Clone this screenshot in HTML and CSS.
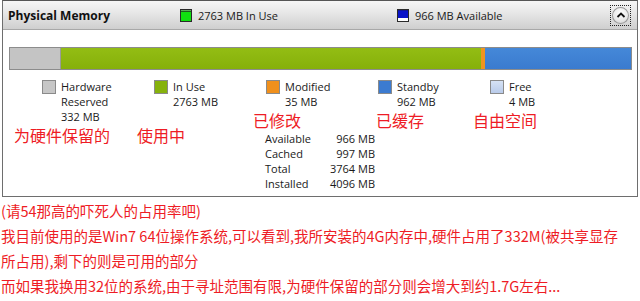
FILE: index.html
```html
<!DOCTYPE html>
<html lang="zh-CN">
<head>
    <meta charset="UTF-8">
    <title>Physical Memory</title>
    <link rel="stylesheet" href="styles.css">
</head>
<body>
    <div class="panel">
        <div class="header">
            <div class="title">Physical Memory</div>
            <div class="summary summary-use">
                <svg class="chip" width="12" height="13" viewBox="0 0 12 13">
                    <rect x="0.5" y="0.5" width="11" height="12" fill="#10e010" stroke="#2a2a2a"/>
                    <rect x="1" y="1" width="10" height="2" fill="#1d5a1d"/>
                    <path d="M2 1v1M4 1v1M6 1v1M8 1v1M10 1v1" stroke="#9f9" stroke-width="1"/>
                </svg>
                <span>2763 MB In Use</span>
            </div>
            <div class="summary summary-free">
                <svg class="chip" width="12" height="13" viewBox="0 0 12 13">
                    <rect x="0.5" y="0.5" width="11" height="12" fill="#ffffff" stroke="#2a2a2a"/>
                    <rect x="1" y="1" width="10" height="8" fill="#0a14c8"/>
                    <path d="M2 1v1M4 1v1M6 1v1M8 1v1M10 1v1" stroke="#1a1a66" stroke-width="1"/>
                </svg>
                <span>966 MB Available</span>
            </div>
            <div class="collapse">
                <span class="collapse-btn">
                    <svg width="10" height="8" viewBox="0 0 10 8">
                        <path d="M1.5 6 L5 2.5 L8.5 6" fill="none" stroke="#111" stroke-width="1.8"/>
                    </svg>
                </span>
            </div>
        </div>

        <div class="content">
            <div class="bar">
                <div class="seg seg-hw" style="width: 50px"></div>
                <div class="seg seg-use" style="width: 420px"></div>
                <div class="seg seg-mod" style="width: 4px"></div>
                <div class="seg seg-standby" style="flex: 1"></div>
            </div>

            <div class="legend">
                <div class="item">
                    <span class="swatch sw-hw"></span>
                    <div class="lines">Hardware<br>Reserved<br>332 MB</div>
                </div>
                <div class="item">
                    <span class="swatch sw-use"></span>
                    <div class="lines">In Use<br>2763 MB</div>
                </div>
                <div class="item">
                    <span class="swatch sw-mod"></span>
                    <div class="lines">Modified<br>35 MB</div>
                </div>
                <div class="item">
                    <span class="swatch sw-standby"></span>
                    <div class="lines">Standby<br>962 MB</div>
                </div>
                <div class="item">
                    <span class="swatch sw-free"></span>
                    <div class="lines">Free<br>4 MB</div>
                </div>
            </div>

            <div class="stats">
                <span>Available</span><span class="val">966 MB</span>
                <span>Cached</span><span class="val">997 MB</span>
                <span>Total</span><span class="val">3764 MB</span>
                <span>Installed</span><span class="val">4096 MB</span>
            </div>
        </div>

        <span class="note note-hw">为硬件保留的</span>
        <span class="note note-use">使用中</span>
        <span class="note note-mod">已修改</span>
        <span class="note note-standby">已缓存</span>
        <span class="note note-free">自由空间</span>
    </div>

    <div class="text">
        <p>(请54那高的吓死人的占用率吧)</p>
        <p>我目前使用的是Win7 64位操作系统,可以看到,我所安装的4G内存中,硬件占用了332M(被共享显存所占用),剩下的则是可用的部分</p>
        <p>而如果我换用32位的系统,由于寻址范围有限,为硬件保留的部分则会增大到约1.7G左右...</p>
    </div>
</body>
</html>
```

FILE: styles.css
```css
body { margin: 0; background: #fff; font-family: 'Open Sans', 'Noto Sans', sans-serif; font-size: 11px; color: #1a1a1a; }

.panel { position: relative; margin: 0 2px; height: 195px; border: 1px solid #6e6e6e; border-top-color: #555; background: #fff; }

.header { display: flex; align-items: center; height: 28px; padding-left: 5px; background: linear-gradient(#f6f6f6, #e6e6e6 45%, #cfcfcf); border-bottom: 1px solid #a8a8a8; }
.title { width: 172px; font-size: 12px; font-weight: bold; color: #111; }
.summary { display: flex; align-items: center; gap: 6px; }
.summary-use { width: 217px; }
.summary-free { flex: 1; }
.chip { display: block; }
.collapse { width: 19px; height: 19px; margin-right: 6px; border: 1px dotted #222; display: flex; align-items: center; justify-content: center; }
.collapse-btn { width: 17px; height: 17px; border-radius: 50%; background: radial-gradient(circle at 50% 35%, #ffffff, #e4e4e4 60%, #bdbdbd); box-shadow: 0 0 0 1px #9a9a9a inset; display: flex; align-items: center; justify-content: center; }

.content { padding: 17px 5px 0 6px; }

.bar { display: flex; height: 21px; border: 1px solid #8c8c8c; background: #3f82d3; }
.seg { height: 100%; }
.seg-hw { background: #c4c4c4; border-right: 1px solid #9a9a9a; }
.seg-use { background: linear-gradient(#93bd14, #86b00a); }
.seg-mod { background: #ef9420; }
.seg-standby { background: linear-gradient(#4588d8, #3a7bcf); }

.legend { display: grid; grid-template-columns: repeat(5, 112px); padding-left: 33px; margin-top: 9px; }
.item { display: flex; gap: 5px; }
.swatch { width: 12px; height: 12px; margin-top: 1px; border: 1px solid #8a8a8a; }
.sw-hw { background: #c6c6c6; }
.sw-use { background: #86b20c; }
.sw-mod { background: #f0901c; }
.sw-standby { background: #3c7bd0; }
.sw-free { background: linear-gradient(#d6e2f4, #b9cbea); }
.lines { line-height: 15px; }

.stats { display: grid; grid-template-columns: 62px 48px; line-height: 15px; margin: 7px 0 0 256px; white-space: nowrap; }
.val { text-align: right; }

.note { position: absolute; font-family: 'Noto Sans CJK SC', sans-serif; font-size: 16px; line-height: 16px; color: #ee1c25; }
.note-hw { left: 11px; top: 126px; }
.note-use { left: 134px; top: 126px; }
.note-mod { left: 250px; top: 111px; }
.note-standby { left: 373px; top: 111px; }
.note-free { left: 470px; top: 111px; }

.text { padding: 1px 0 0 1px; font-family: 'Noto Sans CJK SC', sans-serif; font-size: 14.5px; line-height: 25px; color: #ee1c25; width: 630px; }
.text p { margin: 0; }
```
